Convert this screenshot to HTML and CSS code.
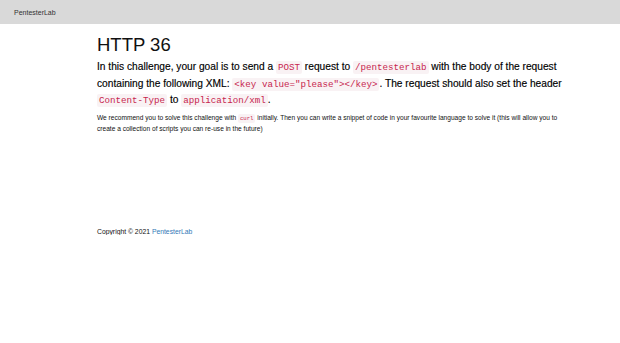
FILE: index.html
```html
<!DOCTYPE html>
<html>
  <head>
    <meta charset="utf-8">
    <title>PentesterLab</title>
    <link rel="stylesheet" href="styles.css">
  </head>
  <body>
    <div class="navbar">
      <span class="brand">PentesterLab</span>
    </div>
    <div class="container">
      <h1>HTTP 36</h1>
      <p class="lead">In this challenge, your goal is to send a <code>POST</code> request to <code>/pentesterlab</code> with the body of the request containing the following XML: <code>&lt;key value="please"&gt;&lt;/key&gt;</code>. The request should also set the header <code>Content-Type</code> to <code>application/xml</code>.</p>
      <p class="note">We recommend you to solve this challenge with <code>curl</code> initially. Then you can write a snippet of code in your favourite language to solve it (this will allow you to create a collection of scripts you can re-use in the future)</p>
      <footer class="footer">
        Copyright &copy; 2021 <a href="#">PentesterLab</a>
      </footer>
    </div>
  </body>
</html>
```

FILE: styles.css
```css
body {
  margin: 0;
  padding: 0;
  font-family: "Liberation Sans", Arial, sans-serif;
  color: #111;
  background-color: #fff;
}
.navbar {
  height: 24px;
  background-color: #d9d9d9;
  display: flex;
  align-items: center;
  padding-left: 14px;
}
.brand {
  font-size: 7px;
  color: #333;
}
.container {
  width: 472px;
  margin-left: 97px;
  padding-top: 10px;
}
h1 {
  font-size: 18.5px;
  font-weight: normal;
  margin: 0 0 4px 0;
  line-height: 21px;
}
.lead {
  font-size: 10.2px;
  line-height: 15.5px;
  margin: 0 0 4px 0;
  color: #000;
  -webkit-text-stroke: 0.15px #000;
}
code {
  font-family: "Liberation Mono", "Courier New", monospace;
  font-size: 0.9em;
  color: #c7254e;
  background-color: #f9f2f4;
  padding: 1px 2px;
  border-radius: 2px;
  -webkit-text-stroke: 0;
}
.note {
  font-size: 6.6px;
  line-height: 10.5px;
  margin: 0;
  width: 466px;
}
.note code {
  font-size: 0.85em;
}
.footer {
  margin-top: 93px;
  font-size: 6.8px;
}
.footer a {
  color: #337ab7;
  text-decoration: none;
}
```
